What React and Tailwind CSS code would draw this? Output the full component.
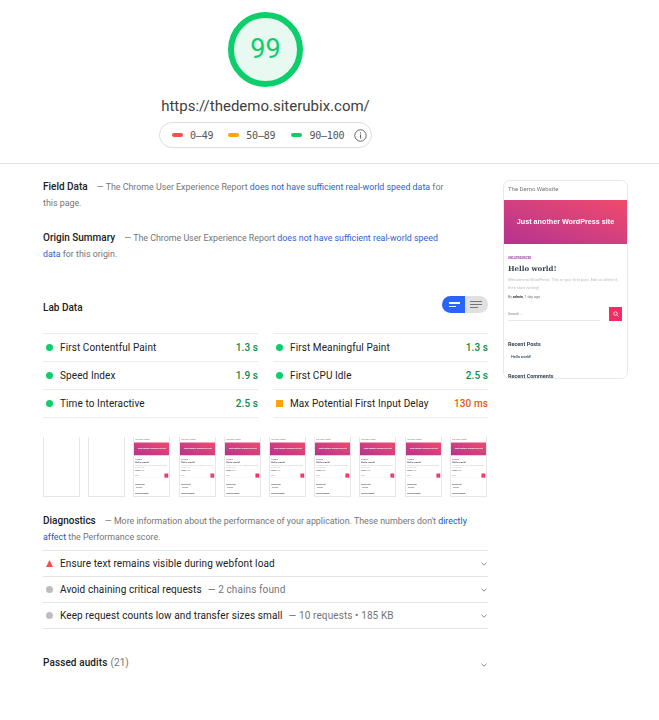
import React from "react";

const font = { fontFamily: "Roboto, sans-serif" };

function Preview() {
  return (
    <div className="flex flex-col w-[125px] h-[198px] overflow-hidden bg-white blur-[0.45px] font-['Roboto',sans-serif]">
      <div className="h-[19px] shrink-0 pl-[4px] pt-[3px] text-[6px] leading-[10px] text-[#777]">The Demo Website</div>
      <div className="h-[44px] w-[123px] shrink-0 flex items-center justify-center bg-gradient-to-tr from-[#b5318f] to-[#f04a6b] text-white font-bold text-[7.2px] font-['Liberation_Sans',sans-serif]">Just another WordPress site</div>
      <div className="pl-[4px] pr-[6px]">
        <div className="mt-[12px] text-[2.8px] leading-[4px] font-bold text-[#9c3fa0] tracking-[0.1px]">UNCATEGORIZED</div>
        <div className="mt-[3px] text-[7px] leading-[12px] font-bold text-[#3a4450] font-['DejaVu_Serif',serif]">Hello world!</div>
        <div className="mt-[1px] text-[4px] leading-[8px] text-[#bbb]">Welcome to WordPress. This is your first post. Edit or delete it, then start writing!</div>
        <div className="mt-[2px] text-[3.6px] leading-[6px] text-[#777]">By <b className="text-[#333]">admin</b>, 1 day ago</div>
        <div className="mt-[7px] flex items-end gap-[9px]">
          <div className="w-[92px] h-[14px] border-b border-[#e8e8e8] text-[3.6px] leading-[10px] text-[#888] flex items-center">Search ...</div>
          <div className="w-[13px] h-[14px] bg-[#f32c64] flex items-center justify-center">
            <svg width="6" height="6" viewBox="0 0 24 24" fill="none" stroke="white" strokeWidth="3"><circle cx="10" cy="10" r="7" /><path d="M15 15l7 7" /></svg>
          </div>
        </div>
        <div className="mt-[19px] text-[5.5px] leading-[8px] font-bold text-[#3a4450]">Recent Posts</div>
        <div className="mt-[6px] pl-[3px] text-[3.8px] leading-[6px] font-medium text-[#2d4a62]">Hello world!</div>
        <div className="mt-[12px] text-[5.5px] leading-[8px] font-bold text-[#3a4450] whitespace-nowrap">Recent Comments</div>
      </div>
    </div>
  );
}

function Thumb({ blank }) {
  return (
    <div className="w-[37px] h-[60px] overflow-hidden bg-white border-x border-b border-[#e6e6e6]">
      {!blank && (
        <div className="origin-top-left scale-[0.29]">
          <Preview />
        </div>
      )}
    </div>
  );
}

function Dot({ color = "bg-[#0cce6b]" }) {
  return <span className={`w-[7px] h-[7px] rounded-full shrink-0 ${color}`} />;
}

function Metric({ label, value, warn }) {
  return (
    <div className="h-[28px] flex items-center border-b border-[#ebebeb] pl-[3px] text-[10px] tracking-[0.1px]">
      {warn ? <span className="w-[7px] h-[7px] shrink-0 bg-[#ffa400]" /> : <Dot />}
      <span className="ml-[7px] text-[#212121]">{label}</span>
      <span className={`ml-auto font-medium ${warn ? "text-[#e8590c]" : "text-[#0d8a4a]"}`}>{value}</span>
    </div>
  );
}

function Chevron() {
  return (
    <svg width="6" height="4" viewBox="0 0 6 4" fill="none" stroke="#8a8a8a" strokeWidth="1" className="ml-auto mr-[1px] shrink-0">
      <path d="M0.5 0.8l2.5 2.4 2.5-2.4" />
    </svg>
  );
}

function Audit({ icon, label, note }) {
  return (
    <div className="h-[26px] flex items-center border-b border-[#e4e4e4] pl-[3px] text-[10px] tracking-[0.1px]">
      {icon}
      <span className="ml-[7px] text-[#212121]">{label}</span>
      {note && <span className="ml-[6px] text-[#757575]">— {note}</span>}
      <Chevron />
    </div>
  );
}

function Legend({ color, label }) {
  return (
    <span className="flex items-center gap-[7px]">
      <span className={`w-[11px] h-[3.5px] rounded-full ${color}`} />
      <span>{label}</span>
    </span>
  );
}

export default function App() {
  return (
    <div className="w-[659px] h-[720px] bg-white overflow-hidden relative" style={font}>
      <header className="h-[164px] border-b border-[#e0e0e0] box-border pt-[12px]">
        <div className="w-[531px] flex flex-col items-center">
          <div className="w-[75px] h-[75px] rounded-full border-[6px] border-[#0cce6b] bg-[#e7f9f0] flex items-center justify-center text-[#0cce6b] text-[27px]">
            <span>99</span>
          </div>
          <div className="mt-[9px] text-[15px] leading-[20px] text-[#3f3f3f]">https://thedemo.siterubix.com/</div>
          <div className="mt-[6px] w-[213px] h-[26px] rounded-full border border-[#dcdcdc] flex items-center pl-[12px] text-[10px] text-[#555] font-['DejaVu_Sans_Mono',monospace] tracking-[-0.2px]">
            <Legend color="bg-[#ff4e42]" label="0–49" />
            <span className="w-[15px]" />
            <Legend color="bg-[#ffa400]" label="50–89" />
            <span className="w-[16px]" />
            <Legend color="bg-[#0cce6b]" label="90–100" />
            <svg width="13" height="13" viewBox="0 0 13 13" fill="none" className="ml-[10px]">
              <circle cx="6.5" cy="6.5" r="5.7" stroke="#666" strokeWidth="1" />
              <rect x="6" y="5.6" width="1.1" height="4" fill="#666" />
              <rect x="6" y="3.4" width="1.1" height="1.2" fill="#666" />
            </svg>
          </div>
        </div>
      </header>

      <main className="flex pl-[43px] pt-[15px]">
        <div className="w-[445px] shrink-0">
          <p className="w-[405px] text-[8.85px] leading-[16px] text-[#757575]">
            <b className="font-medium text-[#212121] text-[10px] mr-[9px]">Field Data</b>— The Chrome User Experience Report <span className="text-[#2f5fd0]">does not have sufficient real-world speed data</span> for this page.
          </p>
          <p className="mt-[19px] w-[405px] text-[8.85px] leading-[16px] text-[#757575]">
            <b className="font-medium text-[#212121] text-[10px] mr-[9px]">Origin Summary</b>— The Chrome User Experience Report <span className="text-[#2f5fd0]">does not have sufficient real-world speed data</span> for this origin.
          </p>

          <div className="mt-[34px] h-[18px] flex justify-between">
            <b className="mt-[4px] font-medium text-[#212121] text-[10px] leading-[16px]">Lab Data</b>
            <div className="flex w-[46px] h-[17px] rounded-full overflow-hidden">
              <div className="w-[23px] bg-[#2b63ff] flex flex-col justify-center gap-[2px] items-end pr-[5px]">
                <span className="w-[11px] h-[1.5px] bg-white" />
                <span className="w-[7px] h-[1.5px] bg-white mr-[4px]" />
              </div>
              <div className="w-[23px] bg-[#e0e0e0] flex flex-col justify-center gap-[2px] pl-[5px]">
                <span className="w-[12px] h-[1px] bg-[#757575]" />
                <span className="w-[12px] h-[1px] bg-[#757575]" />
                <span className="w-[8px] h-[1px] bg-[#757575]" />
              </div>
            </div>
          </div>

          <div className="mt-[19px] grid grid-cols-2 gap-x-[15px]">
            <div className="border-t border-[#ebebeb]">
              <Metric label="First Contentful Paint" value="1.3 s" />
              <Metric label="Speed Index" value="1.9 s" />
              <Metric label="Time to Interactive" value="2.5 s" />
            </div>
            <div className="border-t border-[#ebebeb]">
              <Metric label="First Meaningful Paint" value="1.3 s" />
              <Metric label="First CPU Idle" value="2.5 s" />
              <Metric label="Max Potential First Input Delay" value="130 ms" warn />
            </div>
          </div>

          <div className="mt-[19px] flex gap-[8.2px]">
            <Thumb blank />
            <Thumb blank />
            <Thumb />
            <Thumb />
            <Thumb />
            <Thumb />
            <Thumb />
            <Thumb />
            <Thumb />
            <Thumb />
          </div>

          <p className="mt-[16px] w-[430px] text-[8.85px] leading-[16px] text-[#757575]">
            <b className="font-medium text-[#212121] text-[10px] mr-[9px]">Diagnostics</b>— More information about the performance of your application. These numbers don't <span className="text-[#1a56c4]">directly affect</span> the Performance score.
          </p>
          <div className="mt-[5px] border-t border-[#e4e4e4]">
            <Audit
              label="Ensure text remains visible during webfont load"
              icon={
                <svg width="7" height="7" viewBox="0 0 7 7" className="shrink-0">
                  <path d="M3.5 0L7 7H0z" fill="#ff4e42" />
                </svg>
              }
            />
            <Audit label="Avoid chaining critical requests" note="2 chains found" icon={<Dot color="bg-[#bdbdbd]" />} />
            <Audit label="Keep request counts low and transfer sizes small" note="10 requests • 185 KB" icon={<Dot color="bg-[#bdbdbd]" />} />
          </div>
          <div className="mt-[25px] h-[16px] flex items-center text-[10px] tracking-[0.1px]">
            <b className="font-medium text-[#212121]">Passed audits</b>
            <span className="ml-[3px] text-[#757575]">(21)</span>
            <span className="ml-auto mt-[6px] flex"><Chevron /></span>
          </div>
        </div>

        <aside className="ml-[15px] mt-[1px] w-[125px] h-[199px] shrink-0">
          <div className="w-[125px] h-[199px] rounded-[7px] border border-[#e8e8e8] overflow-hidden">
            <Preview />
          </div>
        </aside>
      </main>
    </div>
  );
}
